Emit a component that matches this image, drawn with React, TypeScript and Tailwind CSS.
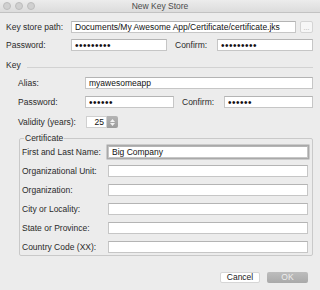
import { useState } from "react";

const field =
  "min-w-0 h-[12px] border border-[#c6c6c6] border-t-[#b4b4b4] bg-white px-[3px] text-[8.5px] text-[#111] outline-none";

const Label = ({ children, w }: { children: string; w: string }) => (
  <span className={`${w} shrink-0 text-[8.5px] leading-none text-[#2a2a2a]`}>{children}</span>
);

const CertRow = ({ label, value = "", focused = false }: { label: string; value?: string; focused?: boolean }) => (
  <div className="flex items-center h-[12px]">
    <Label w="w-[86px]">{label}</Label>
    <input
      readOnly
      defaultValue={value}
      className={`${field} flex-1 ${focused ? "ring-[1.5px] ring-[#a9a9a9] border-[#9a9a9a]" : ""}`}
    />
  </div>
);

const App = () => {
  const [validity] = useState(25);

  return (
    <div
      className="w-[320px] h-[290px] bg-[#ececec] flex flex-col overflow-hidden"
      style={{ fontFamily: '"Liberation Sans", Arial, sans-serif' }}
    >
      {/* Title bar */}
      <div className="relative h-[13px] shrink-0 flex items-center justify-center border-b border-[#c2c2c2] bg-gradient-to-b from-[#ececec] to-[#dcdcdc]">
        <div className="absolute left-[3px] top-[2px] flex gap-[4px]">
          <span className="w-[8px] h-[8px] rounded-full bg-[#d0d0d0] border border-[#bcbcbc]" />
          <span className="w-[8px] h-[8px] rounded-full bg-[#d0d0d0] border border-[#bcbcbc]" />
          <span className="w-[8px] h-[8px] rounded-full bg-[#d0d0d0] border border-[#bcbcbc]" />
        </div>
        <span className="text-[8.5px] leading-none text-[#4a4a4a]">New Key Store</span>
      </div>

      <div className="flex flex-col pl-[6px] pr-[7px]">
        {/* Key store path */}
        <div className="mt-[8px] flex items-center h-[12px]">
          <Label w="w-[65px]">Key store path:</Label>
          <input
            readOnly
            defaultValue="Documents/My Awesome App/Certificate/certificate.jks"
            className={`${field} flex-1`}
          />
          <button className="ml-[4px] shrink-0 w-[13px] h-[12px] border border-[#d4d4d4] bg-[#f6f6f6] rounded-[2px] text-[7px] leading-none text-[#aaa]">
            ...
          </button>
        </div>

        {/* Password / Confirm */}
        <div className="mt-[6px] flex items-center h-[12px]">
          <Label w="w-[65px]">Password:</Label>
          <input readOnly type="password" defaultValue="123456789" className={`${field} w-[96px] shrink-0 text-[10px] tracking-[0.5px]`} />
          <span className="ml-[8px] w-[42px] shrink-0 text-[8.5px] leading-none text-[#2a2a2a]">Confirm:</span>
          <input readOnly type="password" defaultValue="123456789" className={`${field} flex-1 text-[10px] tracking-[0.5px]`} />
        </div>

        {/* Key section */}
        <div className="mt-[9px] flex items-center h-[10px]">
          <span className="text-[8.5px] leading-none text-[#2a2a2a]">Key</span>
          <div className="ml-[6px] mt-[4px] flex-1 h-px bg-[#d2d2d2]" />
        </div>

        <div className="pl-[12px] flex flex-col">
          <div className="mt-[7px] flex items-center h-[12px]">
            <Label w="w-[67px]">Alias:</Label>
            <input readOnly defaultValue="myawesomeapp" className={`${field} flex-1`} />
          </div>

          <div className="mt-[7px] flex items-center h-[12px]">
            <Label w="w-[67px]">Password:</Label>
            <input readOnly type="password" defaultValue="123456" className={`${field} w-[89px] shrink-0 text-[10px] tracking-[0.5px]`} />
            <span className="ml-[8px] w-[42px] shrink-0 text-[8.5px] leading-none text-[#2a2a2a]">Confirm:</span>
            <input readOnly type="password" defaultValue="123456" className={`${field} flex-1 text-[10px] tracking-[0.5px]`} />
          </div>

          <div className="mt-[8px] flex items-center h-[12px]">
            <Label w="w-[68px]">Validity (years):</Label>
            <div className="flex h-[12px]">
              <div className="w-[21px] h-[12px] border border-[#d0d0d0] bg-white text-right pr-[2px] text-[8.5px] leading-[10px] text-[#111]">
                {validity}
              </div>
              <div className="w-[11px] h-[12px] rounded-r-[2px] bg-gradient-to-b from-[#b4b4b4] to-[#9c9c9c] flex flex-col items-center justify-center gap-[1px]">
                <svg width="5" height="3" viewBox="0 0 5 3">
                  <path d="M0 3 L2.5 0 L5 3 Z" fill="#f2f2f2" />
                </svg>
                <svg width="5" height="3" viewBox="0 0 5 3">
                  <path d="M0 0 L2.5 3 L5 0 Z" fill="#f2f2f2" />
                </svg>
              </div>
            </div>
          </div>
        </div>

        {/* Certificate group */}
        <fieldset className="mt-[5px] ml-[13px] border border-[#c9c9c9] rounded-[2px] pl-[2px] pr-[4px] pt-[3px] pb-[2px] flex flex-col gap-[7px]">
          <legend className="ml-[2px] px-[1px] text-[8.5px] leading-[10px] text-[#2a2a2a]">Certificate</legend>
          <CertRow label="First and Last Name:" value="Big Company" focused />
          <CertRow label="Organizational Unit:" />
          <CertRow label="Organization:" />
          <CertRow label="City or Locality:" />
          <CertRow label="State or Province:" />
          <CertRow label="Country Code (XX):" />
        </fieldset>

        {/* Buttons */}
        <div className="mt-[16px] flex justify-end gap-[7px] pr-[5px]">
          <button className="w-[40px] h-[11px] rounded-[2px] bg-white border border-[#d6d6d6] text-[8.5px] leading-none text-[#1a1a1a]">
            Cancel
          </button>
          <button className="w-[41px] h-[11px] rounded-[2px] bg-gradient-to-b from-[#bdbdbd] to-[#a9a9a9] text-[8.5px] leading-none text-[#ededed]">
            OK
          </button>
        </div>
      </div>
    </div>
  );
};

export default App;
